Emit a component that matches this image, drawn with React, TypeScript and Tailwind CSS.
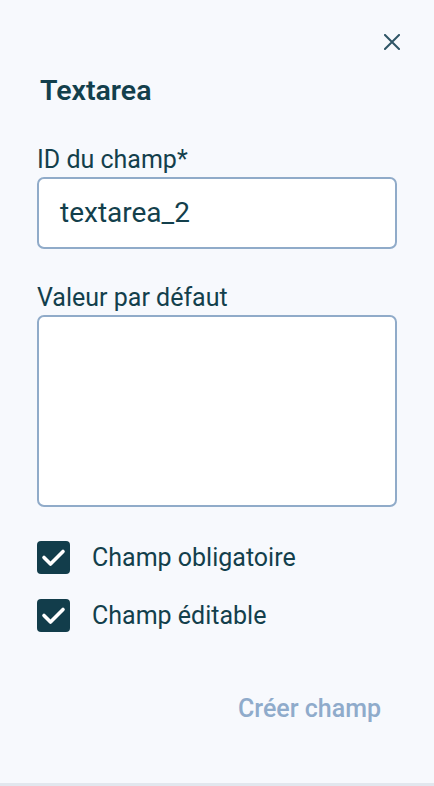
import React from "react";

function CheckBox() {
  return (
    <div className="w-[33px] h-[33px] rounded-[4px] bg-[#123d4b] flex items-center justify-center shrink-0">
      <svg width="33" height="33" viewBox="0 0 33 33" fill="none">
        <path d="M7 16.5 L13.5 23 L26 10.5" stroke="#ffffff" strokeWidth="3.6" strokeLinecap="round" strokeLinejoin="round" />
      </svg>
    </div>
  );
}

export default function App() {
  return (
    <div
      className="w-[434px] h-[786px] bg-[#f7f9fd] flex flex-col text-[#133f4c] overflow-hidden"
      style={{ fontFamily: "Roboto, 'Noto Sans', sans-serif" }}
    >
      <div className="flex justify-end pt-[34px] pr-[34px]">
        <button className="w-4 h-4 flex items-center justify-center">
          <svg width="16" height="16" viewBox="0 0 16 16" fill="none">
            <path d="M1 1 L15 15 M15 1 L1 15" stroke="#2f5566" strokeWidth="2" strokeLinecap="square" />
          </svg>
        </button>
      </div>

      <div className="px-[37px] flex flex-col">
        <h2 className="mt-[25px] pl-[3px] text-[28.5px] leading-[32px] font-semibold">Textarea</h2>

        <label className="mt-[38px] text-[25px] leading-[29px]">ID du champ*</label>
        <div className="mt-[3px] h-[72px] rounded-[7px] border-2 border-[#90abc9] bg-white flex items-center pl-[21px] text-[28px] leading-[32px]">
          textarea_2
        </div>

        <label className="mt-[34px] text-[25px] leading-[29px]">Valeur par défaut</label>
        <div className="mt-[3px] h-[192px] rounded-[7px] border-2 border-[#90abc9] bg-white" />

        <div className="mt-[34px] flex flex-col gap-[25px]">
          <div className="flex items-center gap-[22px]">
            <CheckBox />
            <span className="text-[25px] leading-[29px]">Champ obligatoire</span>
          </div>
          <div className="flex items-center gap-[22px]">
            <CheckBox />
            <span className="text-[25px] leading-[29px]">Champ éditable</span>
          </div>
        </div>

        <div className="mt-[62px] flex justify-end">
          <button className="px-4 text-[25px] leading-[29px] font-medium text-[#8fabcb]">Créer champ</button>
        </div>
      </div>

      <div className="mt-auto h-[3px] bg-[#e2e7ee]" />
    </div>
  );
}
